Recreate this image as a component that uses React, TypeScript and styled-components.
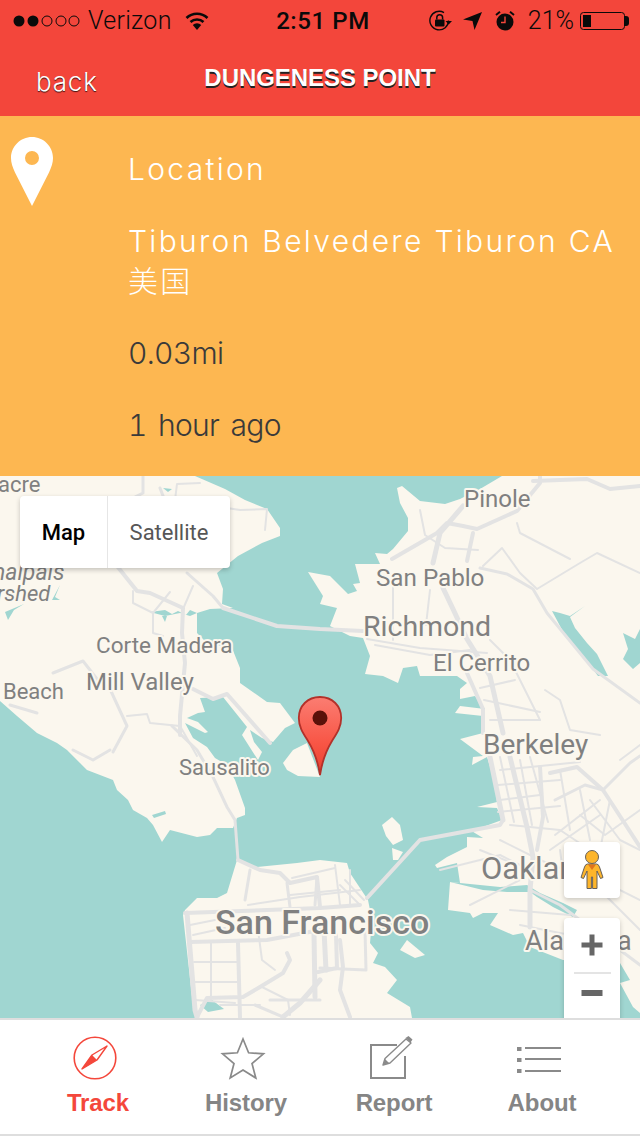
import React from "react";
import styled, { createGlobalStyle } from "styled-components";

const Global = createGlobalStyle`
  html, body { margin: 0; padding: 0; background: #fff; }
  #root { width: 640px; height: 1136px; overflow: hidden; }
  * { box-sizing: border-box; }
`;

const Page = styled.div`
  width: 640px;
  height: 1136px;
  display: flex;
  flex-direction: column;
  font-family: "Liberation Sans", Arial, sans-serif;
`;

const Header = styled.header`
  height: 116px;
  background: #f3463b;
  display: flex;
  flex-direction: column;
`;

const StatusBar = styled.div`
  height: 40px;
  padding: 1px 11px 0 13px;
  display: grid;
  grid-template-columns: 1fr auto 1fr;
  align-items: center;
  color: #0a0a0a;
  font-family: Roboto, sans-serif;
  font-size: 25px;
`;

const StatusGroup = styled.div<{ $end?: boolean }>`
  display: flex;
  align-items: center;
  justify-content: ${(p) => (p.$end ? "flex-end" : "flex-start")};
`;

const Carrier = styled.span`
  margin: 0 13px 0 8px;
  font-weight: 300;
  letter-spacing: 0.3px;
`;

const Clock = styled.span`
  font-weight: 500;
  font-size: 24px;
  letter-spacing: 0.6px;
  position: relative;
  left: 2px;
`;

const Percent = styled.span`
  margin: 0 6px 0 13px;
  font-weight: 300;
`;

const StatusIcon = styled.svg<{ $gap?: number }>`
  display: block;
  margin-left: ${(p) => p.$gap ?? 0}px;
  flex: none;
`;

const NavRow = styled.div`
  flex: 1;
  display: grid;
  grid-template-columns: 1fr auto 1fr;
  align-items: start;
`;

const Back = styled.span`
  padding: 27px 0 0 36px;
  color: #fff;
  font-family: Inter, sans-serif;
  font-weight: 300;
  font-size: 26px;
  line-height: 30px;
  letter-spacing: 0.8px;
  text-shadow: 0 1px 1px rgba(0, 0, 0, 0.75);
`;

const Title = styled.h1`
  margin: 24px 0 0;
  color: #fff;
  font-size: 24px;
  line-height: 28px;
  font-weight: 700;
  letter-spacing: -0.05px;
  text-shadow: 0 2px 0 #222;
`;

const Panel = styled.section`
  height: 360px;
  background: #fdb751;
  display: flex;
  align-items: flex-start;
`;

const PanelPin = styled.svg`
  display: block;
  flex: none;
  margin: 21px 0 0 11px;
`;

const PanelText = styled.div`
  margin-left: 75px;
  padding-top: 33px;
  display: flex;
  flex-direction: column;
  gap: 32px;
`;

const InfoLine = styled.div<{ $dark?: boolean }>`
  width: 495px;
  font-family: Inter, "Noto Sans CJK SC", sans-serif;
  font-size: 30px;
  line-height: 40px;
  font-weight: 300;
  letter-spacing: ${(p) => (p.$dark ? "-0.7px" : "2.3px")};
  word-spacing: ${(p) => (p.$dark ? "4px" : "0")};
  font-variant-numeric: ${(p) => (p.$dark ? "tabular-nums" : "normal")};
  color: ${(p) => (p.$dark ? "#3a3a3a" : "#fff")};
`;

const MapArea = styled.section`
  position: relative;
  height: 542px;
  overflow: hidden;
  background: #a0d6d1;
`;

const MapCanvas = styled.svg`
  display: block;
`;

const MapLabel = styled.text<{ $size: number; $weight?: number; $italic?: boolean }>`
  font-family: Roboto, sans-serif;
  font-size: ${(p) => p.$size}px;
  font-weight: ${(p) => p.$weight ?? 400};
  font-style: ${(p) => (p.$italic ? "italic" : "normal")};
  fill: #808080;
  stroke: #fbf7ee;
  stroke-width: 4px;
  stroke-linejoin: round;
  paint-order: stroke;
`;

const TypeControl = styled.div`
  position: absolute;
  left: 20px;
  top: 20px;
  width: 210px;
  height: 72px;
  display: flex;
  background: #fff;
  border-radius: 4px;
  box-shadow: 0 2px 5px rgba(0, 0, 0, 0.22);
  font-family: Roboto, sans-serif;
  font-size: 22px;
`;

const TypeButton = styled.div<{ $active?: boolean }>`
  display: flex;
  align-items: center;
  justify-content: center;
  flex: ${(p) => (p.$active ? "0 0 88px" : "1")};
  color: ${(p) => (p.$active ? "#000" : "#565656")};
  font-weight: ${(p) => (p.$active ? 500 : 400)};
  border-right: ${(p) => (p.$active ? "1px solid #e6e6e6" : "none")};
`;

const Pegman = styled.div`
  position: absolute;
  left: 564px;
  top: 366px;
  width: 56px;
  height: 56px;
  background: #fff;
  border-radius: 4px;
  box-shadow: 0 2px 5px rgba(0, 0, 0, 0.2);
  display: flex;
  align-items: center;
  justify-content: center;
`;

const ZoomControl = styled.div`
  position: absolute;
  left: 564px;
  top: 442px;
  width: 56px;
  height: 112px;
  background: #fff;
  border-radius: 4px;
  box-shadow: 0 2px 5px rgba(0, 0, 0, 0.2);
  display: flex;
  flex-direction: column;
  align-items: center;
`;

const ZoomGlyph = styled.svg`
  display: block;
  margin-top: 16px;
`;

const ZoomRule = styled.div`
  width: 37px;
  height: 2px;
  margin-top: 16px;
  background: #e4e4e4;
`;

const TabBar = styled.nav`
  height: 118px;
  background: #fff;
  border-top: 2px solid #dedede;
  border-bottom: 2px solid #dedede;
  padding: 0 24px;
  display: grid;
  grid-template-columns: repeat(4, 148px);
`;

const Tab = styled.div<{ $active?: boolean }>`
  display: flex;
  flex-direction: column;
  align-items: center;
  color: ${(p) => (p.$active ? "#f4473b" : "#858585")};
  font-size: 24px;
  font-weight: 700;
  letter-spacing: -0.1px;
`;

const TabIcon = styled.svg`
  display: block;
  height: 46px;
  margin: 17px 6px 0 0;
  overflow: visible;
`;

const TabLabel = styled.span`
  margin-top: 6px;
  line-height: 28px;
`;

type Road = [number, string];

const roads: Road[] = [
  // Marin
  [3, "143,476 143,493 133,498"],
  [4, "117,566 137,591 150,593 183,608 182,633 185,663 180,716 180,735"],
  [4, "223,608 277,626 320,629 363,631"],
  [3, "187,573 213,596 223,608"],
  [2, "193,586 183,609"],
  [2, "133,591 133,603 153,613 153,633 163,636"],
  [2, "153,613 170,592"],
  [2, "200,483 177,484 175,500 240,510 267,509 265,530"],
  [3, "53,673 83,661 97,679 110,689 127,726 113,752"],
  [3, "10,705 37,713"],
  [2, "127,716 147,714 150,723 180,726 197,756"],
  [4, "193,689 213,699 227,694 270,743"],
  [3, "172,726 197,750 213,777 227,807 235,820 238,860"],
  [3, "73,750 93,760 110,750"],
  [3, "160,488 180,540 192,560"],
  // Richmond / Berkeley
  [4, "392,559 437,533 447,523 463,526 477,529 517,511 540,483 540,476"],
  [5, "433,563 440,533 463,506"],
  [4, "533,481 587,479 610,489 640,486"],
  [4, "467,561 473,533"],
  [3, "480,568 507,574 533,589 547,613 593,669 640,703"],
  [5, "443,588 453,609 467,639 490,676 503,733"],
  [4, "467,673 483,709 483,733"],
  [2, "483,566 502,548 520,573 537,589 580,563 597,553 640,573"],
  [2, "517,523 520,533 570,559"],
  [2, "420,510 425,535 445,548 478,550"],
  [2, "367,639 420,648 487,653"],
  [2, "375,645 430,655 470,650"],
  [2, "393,580 393,640"],
  [2, "430,590 426,625"],
  [2, "490,640 510,660 540,720"],
  [2, "545,690 560,700 570,730 600,735"],
  [2, "484,700 540,712"],
  [2, "490,720 540,720"],
  [2, "480,688 515,680"],
  // Berkeley / Oakland
  [4, "367,898 420,840 500,825 503,820"],
  [5, "490,757 503,820"],
  [5, "510,757 527,827 533,857 530,890 530,927"],
  [4, "540,767 543,817 537,850"],
  [4, "550,773 577,767 603,790 640,847"],
  [3, "555,800 585,785 603,790"],
  [3, "603,790 630,763 640,756"],
  [2, "500,770 580,762"],
  [2, "498,785 560,780"],
  [2, "500,800 540,795"],
  [2, "520,760 532,825"],
  [2, "560,770 570,830"],
  [2, "510,825 560,830 590,850"],
  [2, "500,840 540,860 590,880 640,930"],
  [2, "480,850 510,862"],
  [2, "590,800 620,840 640,850"],
  [2, "555,835 600,800"],
  [2, "580,815 605,835 640,810"],
  [3, "530,890 560,905 640,965"],
  [2, "510,910 570,915"],
  [2, "520,925 570,935"],
  [2, "600,880 640,900"],
  [2, "500,757 514,822"],
  [2, "530,757 548,822"],
  [2, "580,790 590,840"],
  [2, "610,800 600,850"],
  [2, "498,812 560,806"],
  [2, "550,850 600,815"],
  [2, "620,760 640,745"],
  [2, "470,905 520,880"],
  [2, "440,870 500,855 530,870"],
  [2, "560,850 564,880"],
  // San Francisco
  [4, "185,913 213,912 320,908 360,905"],
  [4, "190,942 267,940 320,930"],
  [5, "187,913 195,1010 197,1017"],
  [2, "211,942 211,1000"],
  [4, "238,943 240,1017"],
  [2, "194,962 238,962"],
  [2, "194,982 238,982"],
  [4, "287,953 290,960 283,973 260,987 243,997 207,998 197,1017"],
  [5, "320,980 300,1003 283,1017"],
  [5, "314,933 315,997"],
  [5, "324,930 326,970"],
  [4, "336,935 337,968 318,972"],
  [4, "340,940 343,967 340,990 350,1017"],
  [3, "365,930 366,970 320,968"],
  [2, "258,930 262,960 275,970"],
  [3, "250,870 245,900"],
  [3, "287,883 290,907"],
  [4, "238,860 260,870 280,873 290,883 317,877 320,907"],
  [3, "317,877 315,905"],
  [3, "270,1000 320,1000"],
  [3, "255,1005 283,1017"],
  [2, "262,987 288,1000 290,1015"],
  [2, "220,1005 260,1005"],
  [2, "292,878 335,868"],
  [2, "290,895 340,890"],
  [2, "248,905 300,897 360,890"],
  [2, "335,865 340,905"],
  [2, "350,870 350,905"],
  [2, "360,905 340,885"],
  [2, "364,900 345,880"],
  [2, "190,925 215,920"],
  [2, "193,935 225,928"],
  [2, "195,1000 235,1003"],
];

const land = [
  "0,476 195,476 225,489 245,500 267,509 280,528 280,536 262,543 238,556 217,573 223,589 222,604 233,608 210,609 197,613 197,633 207,643 232,648 240,668 240,679 240,683 267,702 280,703 295,723 285,728 273,742 262,738 250,730 254,742 262,752 258,760 242,735 247,727 223,697 200,698 205,712 198,713 187,718 198,722 208,732 205,733 185,723 193,738 207,747 215,758 227,765 235,780 245,808 245,815 237,818 233,828 217,828 210,835 197,837 170,830 162,842 153,825 147,818 133,810 128,800 117,790 113,780 87,770 80,763 67,750 57,743 37,733 17,716 0,701",
  "283,763 293,750 307,743 320,777 298,776 287,770",
  "502,476 480,489 460,499 445,504 420,501 402,486 397,488 400,503 408,518 408,531 393,549 387,554 375,553 380,564 355,564 360,583 353,584 357,591 348,594 330,576 308,572 323,596 320,604 337,608 330,626 350,636 363,638 370,656 365,674 383,676 398,683 403,668 417,666 420,676 457,676 467,683 460,689 460,699 475,696 485,709 460,706 455,713 483,716 483,733 460,739 483,756 473,757 472,765 487,757 495,783 497,802 477,807 497,808 502,820 480,828 470,830 483,838 467,837 467,847 447,857 435,865 437,868 457,863 460,883 450,882 448,910 470,913 473,918 483,913 498,913 490,925 513,935 523,933 530,947 563,960 620,963 630,980 620,983 633,1007 640,1013 640,476",
  "237,860 257,867 297,863 320,860 347,863 350,873 368,900 372,920 370,943 378,953 373,963 385,967 397,980 387,993 410,1007 412,1018 197,1018 193,1006 183,915 185,910 197,898 217,898 227,893",
  "382,825 392,817 400,825 403,840 393,845 386,836",
  "392,848 403,852 398,860 393,860",
  "407,940 425,955 415,958 400,950",
];

const water = [
  "552,611 560,613 570,616 585,606 570,617 575,628 587,643 597,654 608,676 598,676 583,656 567,639",
  "623,633 635,639 640,629 640,663 633,669 623,659 628,649",
  "150,612 165,610 172,614 178,611 186,615 190,610 197,613 190,616 180,613 165,616",
  "162,616 167,616 165,622",
  "5,612 24,604 14,610 8,620",
  "52,600 60,585 55,597 60,600",
  "152,815 165,811 166,814 154,818",
  "450,882 500,887 527,885 540,893 563,903 577,910 573,917 553,907 537,897 530,892 507,892 483,890",
  "200,1005 212,1000 224,1009 208,1012",
  "163,488 172,489 168,492",
  "437,745 445,752 435,754",
];

const labels: { x: number; y: number; s: number; t: string; w?: number; i?: boolean }[] = [
  { x: -2, y: 492, s: 22, t: "acre" },
  { x: -7, y: 580, s: 23, t: "halpais", i: true },
  { x: -3, y: 601, s: 22, t: "rshed", i: true },
  { x: 96, y: 653, s: 22.5, t: "Corte Madera" },
  { x: 86, y: 690, s: 24, t: "Mill Valley" },
  { x: 3, y: 699, s: 22, t: "Beach" },
  { x: 179, y: 775, s: 22, t: "Sausalito" },
  { x: 464, y: 507, s: 24, t: "Pinole" },
  { x: 376, y: 586, s: 24.2, t: "San Pablo" },
  { x: 363, y: 636, s: 28.5, t: "Richmond" },
  { x: 433, y: 671, s: 24, t: "El Cerrito" },
  { x: 483, y: 754, s: 28, t: "Berkeley" },
  { x: 481, y: 879, s: 31, t: "Oakland" },
  { x: 525, y: 950, s: 27, t: "Alameda" },
  { x: 215, y: 934, s: 34, t: "San Francisco", w: 500 },
];

function RotationLock() {
  return (
    <StatusIcon width="23" height="22" viewBox="0 0 23 22" $gap={0}>
      <path d="M19.5 10.5 A9.3 9.3 0 1 1 15 2.6" fill="none" stroke="#0a0a0a" strokeWidth="1.4" />
      <path d="M16.5 11 L23 11 L19.7 14.5 Z" fill="#0a0a0a" />
      <rect x="6" y="9.5" width="9.5" height="7" rx="1" fill="#0a0a0a" />
      <path d="M7.8 9.5 V7.6 a2.9 2.9 0 0 1 5.8 0 V9.5" fill="none" stroke="#0a0a0a" strokeWidth="1.5" />
    </StatusIcon>
  );
}

export default function App() {
  return (
    <Page>
      <Global />
      <Header>
        <StatusBar>
          <StatusGroup>
            <StatusIcon width="67" height="14" viewBox="0 0 67 14">
              <circle cx="6" cy="7" r="5.5" fill="#0a0a0a" />
              <circle cx="20" cy="7" r="5.5" fill="#0a0a0a" />
              <circle cx="34" cy="7" r="5" fill="none" stroke="#0a0a0a" strokeWidth="1" />
              <circle cx="48" cy="7" r="5" fill="none" stroke="#0a0a0a" strokeWidth="1" />
              <circle cx="61" cy="7" r="5" fill="none" stroke="#0a0a0a" strokeWidth="1" />
            </StatusIcon>
            <Carrier>Verizon</Carrier>
            <StatusIcon width="24" height="18" viewBox="0 0 24 18">
              <path d="M1.5 6 A15 15 0 0 1 22.5 6" fill="none" stroke="#0a0a0a" strokeWidth="2.6" />
              <path d="M5.5 10 A9.5 9.5 0 0 1 18.5 10" fill="none" stroke="#0a0a0a" strokeWidth="2.6" />
              <path d="M7.8 13 A6 6 0 0 1 16.2 13 L12 18 Z" fill="#0a0a0a" />
            </StatusIcon>
          </StatusGroup>
          <Clock>2:51 PM</Clock>
          <StatusGroup $end>
            <RotationLock />
            <StatusIcon width="19" height="19" viewBox="0 0 19 19" $gap={11}>
              <path d="M19 1 L11.5 19 L9.5 10 L0 8.5 Z" fill="#0a0a0a" />
            </StatusIcon>
            <StatusIcon width="20" height="20" viewBox="0 0 20 20" $gap={13}>
              <circle cx="10" cy="11" r="8.5" fill="#0a0a0a" />
              <path d="M10 5.5 V11.5 H6" fill="none" stroke="#f4473b" strokeWidth="1.4" />
              <path d="M1 4 L5 0.8 M19 4 L15 0.8" stroke="#0a0a0a" strokeWidth="2" />
            </StatusIcon>
            <Percent>21%</Percent>
            <StatusIcon width="49" height="18" viewBox="0 0 49 18">
              <rect x="0.5" y="0.5" width="44" height="17" rx="3" fill="none" stroke="#0a0a0a" />
              <rect x="3" y="3" width="8" height="12" fill="#0a0a0a" />
              <path d="M45 4 h1 a3 3 0 0 1 3 3 v4 a3 3 0 0 1 -3 3 h-1 Z" fill="#0a0a0a" />
            </StatusIcon>
          </StatusGroup>
        </StatusBar>
        <NavRow>
          <Back>back</Back>
          <Title>DUNGENESS POINT</Title>
        </NavRow>
      </Header>

      <Panel>
        <PanelPin width="42" height="69" viewBox="0 0 42 69">
          <path
            fillRule="evenodd"
            fill="#fff"
            d="M21 0 C9.4 0 0 9.4 0 21 C0 26 1.5 30 4 35.5 L21 69 L38 35.5 C40.5 30 42 26 42 21 C42 9.4 32.6 0 21 0 Z M21 14 A7 7 0 1 1 21 28 A7 7 0 1 1 21 14 Z"
          />
        </PanelPin>
        <PanelText>
          <InfoLine>Location</InfoLine>
          <InfoLine>Tiburon Belvedere Tiburon CA 美国</InfoLine>
          <InfoLine $dark>0.03mi</InfoLine>
          <InfoLine $dark>1 hour ago</InfoLine>
        </PanelText>
      </Panel>

      <MapArea>
        <MapCanvas width="640" height="542" viewBox="0 476 640 542">
          <defs>
            <linearGradient id="pinFill" x1="0" y1="0" x2="0" y2="1">
              <stop offset="0" stopColor="#fb7d72" />
              <stop offset="0.6" stopColor="#f85545" />
              <stop offset="1" stopColor="#e8402f" />
            </linearGradient>
          </defs>
          {land.map((d, i) => (
            <polygon key={i} points={d} fill="#fbf7ee" />
          ))}
          {water.map((d, i) => (
            <polygon key={i} points={d} fill="#a0d6d1" />
          ))}
          {roads.map(([w, d], i) => (
            <polyline
              key={i}
              points={d}
              fill="none"
              stroke="#e3e3e3"
              strokeWidth={w}
              strokeLinejoin="round"
              strokeLinecap="round"
            />
          ))}
          {labels.map((l) => (
            <MapLabel key={l.t} x={l.x} y={l.y} $size={l.s} $weight={l.w} $italic={l.i}>
              {l.t}
            </MapLabel>
          ))}
          <path
            d="M320 697 C307.5 697 298.8 706 298.8 718 C298.8 727 303 733 308 741 C313.5 750 318 762 320 775 C322 762 326.5 750 332 741 C337 733 341.2 727 341.2 718 C341.2 706 332.5 697 320 697 Z"
            fill="url(#pinFill)"
            stroke="#b3312a"
            strokeWidth="1.8"
          />
          <circle cx="320" cy="718" r="7.5" fill="#5a1109" />
        </MapCanvas>
        <TypeControl>
          <TypeButton $active>Map</TypeButton>
          <TypeButton>Satellite</TypeButton>
        </TypeControl>
        <Pegman>
          <svg width="24" height="40" viewBox="0 0 24 40">
            <circle cx="12" cy="7" r="6.5" fill="#fdb52b" stroke="#66605a" strokeWidth="1" />
            <path
              d="M7.5 14 H16.5 Q18.5 14 19.5 17 L23 27.5 L20.5 28.5 L17 21 V38.5 H12.6 V27 H11.4 V38.5 H7 V21 L3.5 28.5 L1 27.5 L4.5 17 Q5.5 14 7.5 14 Z"
              fill="#fdb52b"
              stroke="#66605a"
              strokeWidth="1"
              strokeLinejoin="round"
            />
            <path d="M8 14.5 H16 L12 20 Z" fill="#e0741c" />
          </svg>
        </Pegman>
        <ZoomControl>
          <ZoomGlyph width="22" height="22" viewBox="0 0 22 22">
            <path d="M8.5 0.5 h5 v8 h8 v5 h-8 v8 h-5 v-8 h-8 v-5 h8 Z" fill="#666" />
          </ZoomGlyph>
          <ZoomRule />
          <ZoomGlyph width="22" height="6" viewBox="0 0 22 6">
            <rect x="0.5" y="0" width="21" height="6" fill="#666" />
          </ZoomGlyph>
        </ZoomControl>
      </MapArea>

      <TabBar>
        <Tab $active>
          <TabIcon width="44" height="46" viewBox="0 0 44 46">
            <circle cx="22" cy="21" r="20.8" fill="none" stroke="#f4473b" strokeWidth="1.6" />
            <path d="M34 9 L19 18 L9 32 L24 23 Z" fill="none" stroke="#f4473b" strokeWidth="1.4" strokeLinejoin="round" />
            <path d="M9 32 L19 18 L24 23 Z" fill="#f4473b" />
          </TabIcon>
          <TabLabel>Track</TabLabel>
        </Tab>
        <Tab>
          <TabIcon width="44" height="46" viewBox="0 0 44 46">
            <path
              d="M22 2 L27.6 15.8 L42.5 16.8 L31 26.5 L34.8 41 L22 33 L9.2 41 L13 26.5 L1.5 16.8 L16.4 15.8 Z"
              fill="none"
              stroke="#8a8a8a"
              strokeWidth="1.7"
            />
          </TabIcon>
          <TabLabel>History</TabLabel>
        </Tab>
        <Tab>
          <TabIcon width="44" height="46" viewBox="0 0 44 46">
            <path d="M28 8 H2 V41 H36 V19" fill="none" stroke="#8a8a8a" strokeWidth="2" />
            <path d="M14 28 L16 21.5 L37 2 L42 6 L21 26 Z" fill="none" stroke="#8a8a8a" strokeWidth="1.4" strokeLinejoin="round" />
            <path d="M14 28 L16 22 L20 26 Z M36.5 1 L39.5 -1 L43.5 2.5 L41.5 5.5 Z" fill="#8a8a8a" />
          </TabIcon>
          <TabLabel>Report</TabLabel>
        </Tab>
        <Tab>
          <TabIcon width="44" height="46" viewBox="0 0 44 46">
            <path d="M0 10 h4.5 v4 h-4.5 Z M0 21 h4.5 v4 h-4.5 Z M0 32 h4.5 v4 h-4.5 Z" fill="#8a8a8a" />
            <path d="M8 11 H44 M8 22 H44 M8 34 H44" stroke="#8a8a8a" strokeWidth="2" />
          </TabIcon>
          <TabLabel>About</TabLabel>
        </Tab>
      </TabBar>
    </Page>
  );
}
